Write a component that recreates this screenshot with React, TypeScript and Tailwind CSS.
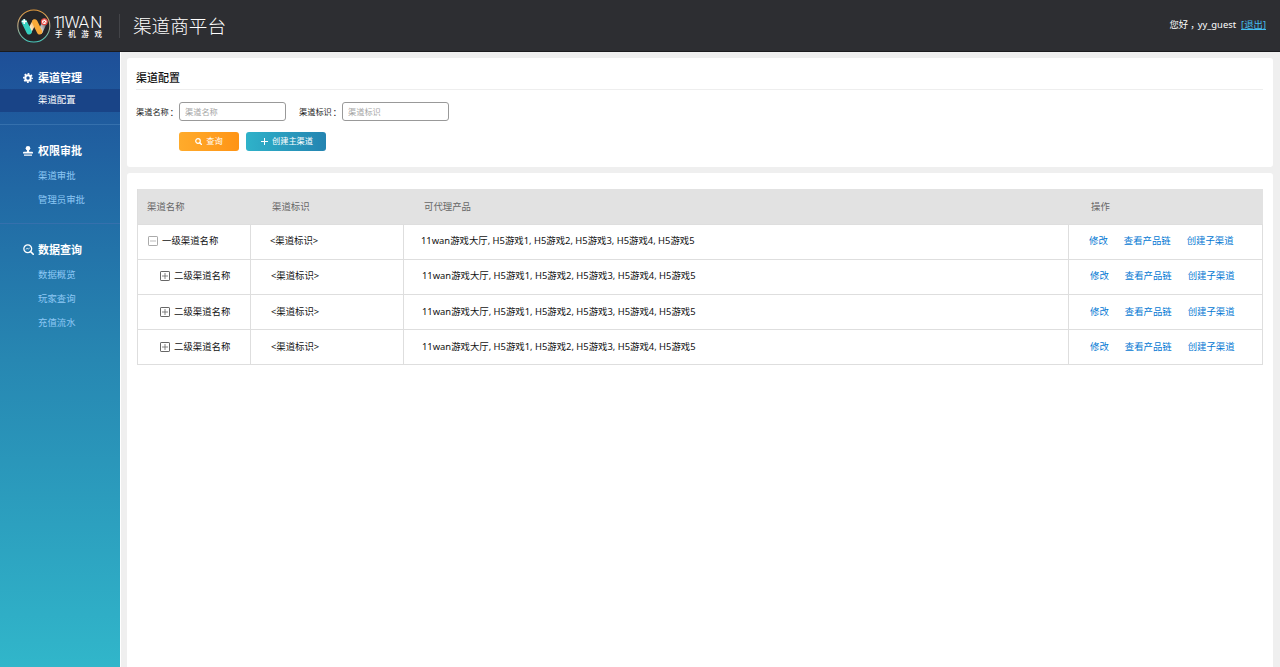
import React, { useState } from "react";
import clsx from "clsx";

interface MenuGroup {
    title: string;
    icon: React.ReactNode;
    items: string[];
    className: string;
}

interface Channel {
    id: number;
    name: string;
    code: string;
    products: string;
    level: 1 | 2;
}

const PRODUCTS = "11wan游戏大厅, H5游戏1, H5游戏2, H5游戏3, H5游戏4, H5游戏5";

const channels: Channel[] = [
    { id: 1, name: "一级渠道名称", code: "<渠道标识>", products: PRODUCTS, level: 1 },
    { id: 2, name: "二级渠道名称", code: "<渠道标识>", products: PRODUCTS, level: 2 },
    { id: 3, name: "二级渠道名称", code: "<渠道标识>", products: PRODUCTS, level: 2 },
    { id: 4, name: "二级渠道名称", code: "<渠道标识>", products: PRODUCTS, level: 2 },
];

function GearIcon() {
    return (
        <svg viewBox="0 0 20 20" className="h-[10px] w-[10px]" fill="none" stroke="#fff">
            <circle cx="10" cy="10" r="5.4" strokeWidth="4" />
            <circle cx="10" cy="10" r="8.3" strokeWidth="3.2" strokeDasharray="3.4 3.12" strokeDashoffset="1.7" />
        </svg>
    );
}

function StampIcon() {
    return (
        <svg viewBox="0 0 20 20" className="h-[10px] w-[10px]" fill="#fff">
            <circle cx="10" cy="4.6" r="4.6" />
            <path d="M8.200 8h3.600l.6 3.600H18a2 2 0 0 1 2 2V15H0v-1.400a2 2 0 0 1 2-2h5.600z" />
            <path d="M2 17h16v2.500H2z" />
        </svg>
    );
}

function DataSearchIcon() {
    return (
        <svg viewBox="0 0 22 22" className="h-[11px] w-[11px]" fill="none" stroke="#fff">
            <circle cx="9.500" cy="9.500" r="7.800" strokeWidth="2.600" />
            <path d="M15 15l5.500 5.500" strokeWidth="3.400" strokeLinecap="round" />
            <path d="M5.500 11l2.700-2.600 2.400 2 3-3" strokeWidth="1.500" />
        </svg>
    );
}

function SearchIcon() {
    return (
        <svg viewBox="0 0 14 14" className="h-[7px] w-[7px]" fill="none" stroke="#fff">
            <circle cx="6" cy="6" r="4.600" strokeWidth="2.400" />
            <path d="M9.500 9.500l3.500 3.500" strokeWidth="2.800" strokeLinecap="round" />
        </svg>
    );
}

function ToggleIcon({ open }: { open: boolean }) {
    return (
        <svg
            viewBox="0 0 10 10"
            className="h-[10px] w-[10px] shrink-0"
            fill="none"
            stroke={open ? "#aaa" : "#666"}
        >
            <rect x=".5" y=".5" width="9" height="9" rx=".6" />
            <path d={open ? "M2 5h6" : "M2 5h6M5 2v6"} strokeWidth=".8" />
        </svg>
    );
}

function Logo() {
    return (
        <svg viewBox="0 0 88 36" className="h-9 w-[88px] overflow-visible">
            <defs>
                <linearGradient id="ring" x1="0" y1="0" x2="0" y2="1">
                    <stop offset="0" stopColor="#e39a3c" />
                    <stop offset=".5" stopColor="#b8a98a" />
                    <stop offset="1" stopColor="#45c9bd" />
                </linearGradient>
                <linearGradient id="tail" x1="0" y1="1" x2="1" y2="0">
                    <stop offset="0" stopColor="#eee" />
                    <stop offset="1" stopColor="#777" />
                </linearGradient>
                <linearGradient id="middle" x1="0" y1="1" x2="1" y2="0">
                    <stop offset="0" stopColor="#fff" />
                    <stop offset="1" stopColor="#f9b75a" />
                </linearGradient>
            </defs>
            <circle cx="17.800" cy="18" r="16" fill="#252528" stroke="url(#ring)" strokeWidth="1.100" />
            <g fill="none" strokeLinecap="round" strokeWidth="4.600">
                <path d="M24.500 23.500l4-9" stroke="url(#tail)" />
                <path d="M13.300 23.500l5-9.500" stroke="url(#middle)" />
                <path d="M8.300 14l4.800 9.800" stroke="#35d0c0" strokeWidth="5.400" />
                <path d="M18.800 14l4.800 9.800" stroke="#f9a938" strokeWidth="5.400" />
            </g>
            <path d="M8.200 11v5M5.700 13.500h5" stroke="#fff" strokeWidth="1.500" />
            <circle cx="28.300" cy="13.700" r="2.900" fill="#fff" stroke="#e6463d" strokeWidth="1.200" />
            <path d="M27.200 12.600l2.200 2.200M29.400 12.600l-2.200 2.200" stroke="#e6463d" strokeWidth=".9" />
            <text
                x="36.500 41.800 48.400 62.500 74.200"
                y="19.800"
                fill="#fff"
                fontSize="17"
                className="font-['Roboto',sans-serif] font-light"
            >
                11WAN
            </text>
            <text x="39 52.300 65.300 78.600" y="29" fill="#fff" fontSize="7.500" fontWeight="500">
                手机游戏
            </text>
        </svg>
    );
}

const menu: MenuGroup[] = [
    { title: "渠道管理", icon: <GearIcon />, items: ["渠道配置"], className: "h-[73px] pt-[14px]" },
    { title: "权限审批", icon: <StampIcon />, items: ["渠道审批", "管理员审批"], className: "h-[99px] pt-[14px]" },
    { title: "数据查询", icon: <DataSearchIcon />, items: ["数据概览", "玩家查询", "充值流水"], className: "pt-[14px]" },
];

function Sidebar() {
    const [active, setActive] = useState("渠道配置");

    return (
        <nav className="w-[120px] shrink-0 bg-linear-to-b from-[#1e4f98] via-[#2787b2] to-[#31b6ca]">
            {menu.map((group, i) => (
                <div
                    key={group.title}
                    className={clsx(
                        group.className,
                        i < menu.length - 1 && "border-b border-[#3570ad]"
                    )}
                >
                    <div className="flex h-[23px] items-center pl-[23px] text-[11px] font-bold text-white">
                        <span className="flex w-[15px] items-center">{group.icon}</span>
                        <span className="pt-px">{group.title}</span>
                    </div>
                    <ul className={clsx(i > 0 && "pt-[2px]")}>
                        {group.items.map((item) => (
                            <li
                                key={item}
                                onClick={() => setActive(item)}
                                className={clsx(
                                    "flex cursor-pointer items-center pl-[38px] text-[9.4px]",
                                    item === active ? "h-[23px] bg-[#194487] text-white" : "h-6 text-[#8ec8f5]"
                                )}
                            >
                                {item}
                            </li>
                        ))}
                    </ul>
                </div>
            ))}
        </nav>
    );
}

function SearchField({ label }: { label: string }) {
    return (
        <label className="flex items-center text-[8.2px] text-[#222]">
            <span className="w-[43px] pt-px whitespace-nowrap">
                {label}
                <span className="relative top-px -left-px font-['Noto_Sans_CJK_TC',sans-serif]" lang="zh-TW">：</span>
            </span>
            <input
                placeholder={label}
                className="h-[19px] w-[107px] rounded-[3px] border border-[#999] px-[5px] text-[8.2px] placeholder:text-[#a5a5a5]"
            />
        </label>
    );
}

function ChannelTable() {
    const cols = "grid grid-cols-[113px_153px_665px_194px] border-b border-l border-[#dedede]";

    return (
        <div className="text-[9.4px] text-[#111]">
            <div className={clsx(cols, "h-9 items-center bg-[#e2e2e2] pt-[2px] text-[#666]")}>
                <span className="pl-[9px]">渠道名称</span>
                <span className="pl-[21px]">渠道标识</span>
                <span className="pl-5">可代理产品</span>
                <span className="pl-[22px]">操作</span>
            </div>
            {channels.map((row, i) => (
                <div
                    key={row.id}
                    className={clsx(
                        cols,
                        "h-[35px]",
                        "*:flex *:items-center *:border-r *:border-[#dedede]",
                        i < 2 && "*:pb-[2px]"
                    )}
                >
                    <div className={clsx("gap-[4px]", row.level === 1 ? "pl-[10px]" : "pl-[22px]")}>
                        <ToggleIcon open={row.level === 1} />
                        {row.name}
                    </div>
                    <div className={row.level === 1 ? "pl-[19px]" : "pl-5"}>{row.code}</div>
                    <div className={row.level === 1 ? "pl-[17px]" : "pl-[18px]"}>{row.products}</div>
                    <div className={clsx("gap-4 text-[#0478d3]", row.level === 1 ? "pl-5" : "pl-[21px]")}>
                        <a href="#">修改</a>
                        <a href="#">查看产品链</a>
                        <a href="#">创建子渠道</a>
                    </div>
                </div>
            ))}
        </div>
    );
}

export default function App() {
    return (
        <div className="flex h-[667px] flex-col overflow-hidden bg-[#efefef] font-['Noto_Sans','Noto_Sans_CJK_SC',sans-serif]">
            <header className="flex h-[52px] shrink-0 items-center border-b border-[#1b1b1e] bg-[#2d2e32] pr-[14px] pl-4">
                <Logo />
                <div className="ml-[15px] h-6 w-px bg-[#434448]" />
                <h1 className="ml-[13px] pt-px text-[18.6px] font-light text-white">渠道商平台</h1>
                <div className="ml-auto flex gap-[5px] text-[9.4px] text-white">
                    <span>
                        您好<span className="relative left-[2px]">，</span>yy_guest
                    </span>
                    <a href="#" className="text-[#45bdf0] underline">[退出]</a>
                </div>
            </header>

            <div className="flex min-h-0 flex-1">
                <Sidebar />
                <main className="flex min-w-0 flex-1 flex-col gap-[6px] border-l border-white pt-[6px] pr-[7px] pl-[6px]">
                    <section className="h-[109px] shrink-0 rounded-[3px] bg-white px-[10px] pt-[8px]">
                        <h2 className="-ml-px h-6 border-b border-[#eee] text-[11px] leading-[23px] font-medium text-[#111]">
                            渠道配置
                        </h2>
                        <div className="mt-[12px] -ml-px flex gap-[13px]">
                            <SearchField label="渠道名称" />
                            <SearchField label="渠道标识" />
                        </div>
                        <div className="mt-[11px] ml-[42px] flex gap-[7px] text-[8.2px] text-white">
                            <button className="flex h-[19px] w-[60px] items-center justify-center gap-[4px] rounded-[3px] bg-linear-to-r from-[#ffab2b] to-[#ff9414]">
                                <SearchIcon />
                                查询
                            </button>
                            <button className="flex h-[19px] w-20 items-center justify-center gap-[4px] rounded-[3px] bg-linear-to-r from-[#2fb2c9] to-[#2484b1] pl-[2px]">
                                <svg viewBox="0 0 7 7" className="h-[7px] w-[7px]" stroke="#fff">
                                    <path d="M0 3.500h7M3.500 0v7" />
                                </svg>
                                创建主渠道
                            </button>
                        </div>
                    </section>

                    <section className="min-h-0 flex-1 rounded-t-[3px] bg-white px-[10px] pt-4">
                        <ChannelTable />
                    </section>
                </main>
            </div>
        </div>
    );
}
